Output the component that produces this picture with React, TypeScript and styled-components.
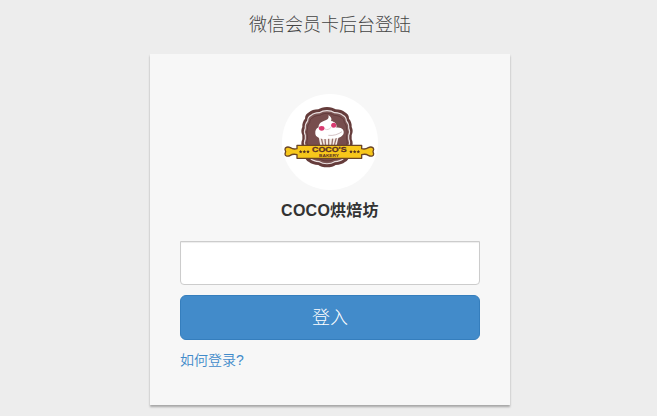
import React from "react";
import styled, { createGlobalStyle } from "styled-components";

const GlobalStyle = createGlobalStyle`
  *, *::before, *::after { box-sizing: border-box; }
  body {
    margin: 0;
    background: #ededed;
    color: #333;
    font-family: "Liberation Sans", "Noto Sans CJK SC", sans-serif;
    overflow: hidden;
  }
`;

const Page = styled.main`
  display: flex;
  flex-direction: column;
  align-items: center;
  width: 660px;
  height: 416px;
`;

const Title = styled.h1`
  margin: 0;
  height: 54px;
  line-height: 50px;
  font-size: 18px;
  font-weight: 300;
  color: #444;
`;

const Card = styled.section`
  display: flex;
  flex-direction: column;
  width: 360px;
  height: 351px;
  padding: 40px 30px 30px;
  background: #f7f7f7;
  box-shadow: 0 2px 2px rgba(0, 0, 0, 0.3);
`;

const Avatar = styled.div`
  align-self: center;
  flex-shrink: 0;
  width: 96px;
  height: 96px;
  border-radius: 50%;
  background: #fff;
  overflow: hidden;

  svg { display: block; }
`;

const ShopName = styled.p`
  margin: 10px 0 0;
  height: 41px;
  line-height: 22px;
  font-size: 16px;
  font-weight: 700;
  letter-spacing: 0.25px;
  text-align: center;
`;

const Form = styled.form`
  display: flex;
  flex-direction: column;
  gap: 10px;
`;

const PasswordInput = styled.input`
  width: 100%;
  height: 44px;
  padding: 10px;
  border: 1px solid #ccc;
  border-radius: 0 0 4px 4px;
  background: #fff;
  box-shadow: inset 0 1px 1px rgba(0, 0, 0, 0.075);
  font-size: 16px;
  outline: none;
`;

const SubmitButton = styled.button`
  width: 100%;
  height: 45px;
  padding: 2px 0 0;
  border: 1px solid #357ebd;
  border-radius: 6px;
  background: #428bca;
  color: #fff;
  font-family: inherit;
  font-size: 18px;
  font-weight: 300;
  line-height: 41px;
`;

const HelpLink = styled.a`
  align-self: flex-start;
  margin-top: 10px;
  font-size: 14px;
  font-weight: 350;
  line-height: 20px;
  color: #428bca;
  text-decoration: none;
`;

const badge =
  "M156 57 C168 57 176 60 182 64 C194 65 204 67 210 73 C218 77 222 83 222 92 C228 99 231 108 230 117 C234 125 234 133 230 141 L230 154 C234 162 234 170 230 178 C231 187 228 196 222 203 C222 212 218 218 210 222 C204 228 194 230 182 231 C176 235 168 238 156 238 C144 238 136 235 130 231 C118 230 108 228 102 222 C94 218 90 212 90 203 C84 196 81 187 82 178 C78 170 78 162 82 154 L82 141 C78 133 78 125 82 117 C81 108 84 99 90 92 C90 83 94 77 102 73 C108 67 118 65 130 64 C136 60 144 57 156 57Z";
const star = "M0 -5.4 L1.6 -1.7 5.4 -1.4 2.6 1.2 3.4 4.9 0 2.9 -3.4 4.9 -2.6 1.2 -5.4 -1.4 -1.6 -1.7Z";

function BakeryLogo() {
  return (
    <svg width="96" height="96" viewBox="21 18 288 288" aria-label="COCO'S BAKERY">
      <path d={badge} fill="#653c3b" />
      <path
        d={badge}
        transform="translate(156 147.5) scale(.88) translate(-156 -147.5)"
        fill="#7d5655"
        stroke="#e9dfdf"
        strokeWidth="4"
      />
      <path
        d={badge}
        transform="translate(156 147.5) scale(.79) translate(-156 -147.5)"
        fill="#774d4d"
        stroke="#5e3636"
        strokeWidth="3"
      />
      <path d="M131 146 L138 184 H182 L191 146Z" fill="#f4ece8" />
      <path d="M139 150 L145 176 M150 151 L152 176 M161 151 V176 M173 151 L170 176 M184 149 L177 176" stroke="#98716c" strokeWidth="4" />
      <path
        d="M160 82 C169 86 171 94 168 99 C181 101 187 110 184 119 C201 117 210 128 205 139 C197 153 175 152 160 152 C140 155 122 149 121 137 C120 128 123 121 131 118 C130 108 138 102 146 99 C157 96 163 92 160 82Z"
        fill="#fff"
      />
      <path d="M160 142 C175 144 190 139 201 131" fill="none" stroke="#cbb7b9" strokeWidth="2.5" />
      <ellipse cx="140" cy="121" rx="8.5" ry="7" fill="#d93a70" />
      <ellipse cx="176" cy="112" rx="7.5" ry="7.5" fill="#d93a70" />
      <path d="M150 123 C156 127 163 124 168 118" fill="none" stroke="#d8c7c9" strokeWidth="2.5" />
      <path
        d="M66 172 H260 V182 C268 184 274 183 280 179 C288 175 296 178 296 184 L294 191 L296 198 C296 204 288 207 280 202 C274 198 268 198 260 200 V211 H66 V200 C58 198 52 198 46 202 C38 207 30 204 30 198 L32 191 L30 184 C30 178 38 175 46 179 C52 183 58 184 66 182Z"
        fill="#f7c71b"
        stroke="#6a4527"
        strokeWidth="4"
        strokeLinejoin="round"
      />
      {[77, 88, 99, 228, 239, 250].map((x) => (
        <path key={x} d={star} transform={`translate(${x} 191)`} fill="#583522" />
      ))}
      <text
        x="163"
        y="193"
        textAnchor="middle"
        textLength="104"
        lengthAdjust="spacingAndGlyphs"
        fontFamily="Liberation Sans, sans-serif"
        fontSize="19"
        fontWeight="700"
        fill="#5b3123"
        stroke="#5b3123"
        strokeWidth="0.8"
      >
        COCO'S
      </text>
      <text
        x="162"
        y="206"
        textAnchor="middle"
        textLength="60"
        lengthAdjust="spacingAndGlyphs"
        fontFamily="Liberation Sans, sans-serif"
        fontSize="12"
        fontWeight="700"
        fill="#5b3123"
      >
        BAKERY
      </text>
    </svg>
  );
}

export default function App() {
  return (
    <>
      <GlobalStyle />
      <Page>
        <Title>微信会员卡后台登陆</Title>
        <Card>
          <Avatar>
            <BakeryLogo />
          </Avatar>
          <ShopName>COCO烘焙坊</ShopName>
          <Form onSubmit={(event: React.FormEvent) => event.preventDefault()}>
            <PasswordInput type="password" aria-label="密码" />
            <SubmitButton type="submit">登入</SubmitButton>
          </Form>
          <HelpLink href="#">如何登录?</HelpLink>
        </Card>
      </Page>
    </>
  );
}
